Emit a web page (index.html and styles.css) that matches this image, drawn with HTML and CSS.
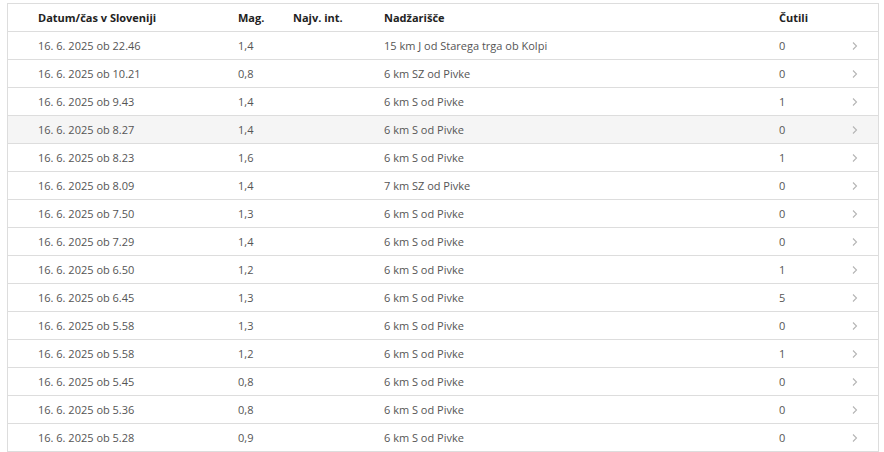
FILE: index.html
```html
<!DOCTYPE html>
<html lang="sl">
<head>
<meta charset="utf-8">
<link rel="stylesheet" href="styles.css">
</head>
<body>
<div class="wrap">
<table class="quakes">
<thead>
<tr>
<th class="c-date">Datum/čas v Sloveniji</th>
<th class="c-mag">Mag.</th>
<th class="c-int">Najv. int.</th>
<th class="c-loc">Nadžarišče</th>
<th class="c-felt">Čutili</th>
<th class="c-arr"></th>
</tr>
</thead>
<tbody>
<tr><td class="c-date">16. 6. 2025 ob 22.46</td><td>1,4</td><td></td><td>15 km J od Starega trga ob Kolpi</td><td>0</td><td class="c-arr"><svg class="chev" width="6" height="10" viewBox="0 0 6 10"><path d="M1 1.5 L4.5 5 L1 8.5"/></svg></td></tr>
<tr><td class="c-date">16. 6. 2025 ob 10.21</td><td>0,8</td><td></td><td>6 km SZ od Pivke</td><td>0</td><td class="c-arr"><svg class="chev" width="6" height="10" viewBox="0 0 6 10"><path d="M1 1.5 L4.5 5 L1 8.5"/></svg></td></tr>
<tr><td class="c-date">16. 6. 2025 ob 9.43</td><td>1,4</td><td></td><td>6 km S od Pivke</td><td>1</td><td class="c-arr"><svg class="chev" width="6" height="10" viewBox="0 0 6 10"><path d="M1 1.5 L4.5 5 L1 8.5"/></svg></td></tr>
<tr class="hover"><td class="c-date">16. 6. 2025 ob 8.27</td><td>1,4</td><td></td><td>6 km S od Pivke</td><td>0</td><td class="c-arr"><svg class="chev" width="6" height="10" viewBox="0 0 6 10"><path d="M1 1.5 L4.5 5 L1 8.5"/></svg></td></tr>
<tr><td class="c-date">16. 6. 2025 ob 8.23</td><td>1,6</td><td></td><td>6 km S od Pivke</td><td>1</td><td class="c-arr"><svg class="chev" width="6" height="10" viewBox="0 0 6 10"><path d="M1 1.5 L4.5 5 L1 8.5"/></svg></td></tr>
<tr><td class="c-date">16. 6. 2025 ob 8.09</td><td>1,4</td><td></td><td>7 km SZ od Pivke</td><td>0</td><td class="c-arr"><svg class="chev" width="6" height="10" viewBox="0 0 6 10"><path d="M1 1.5 L4.5 5 L1 8.5"/></svg></td></tr>
<tr><td class="c-date">16. 6. 2025 ob 7.50</td><td>1,3</td><td></td><td>6 km S od Pivke</td><td>0</td><td class="c-arr"><svg class="chev" width="6" height="10" viewBox="0 0 6 10"><path d="M1 1.5 L4.5 5 L1 8.5"/></svg></td></tr>
<tr><td class="c-date">16. 6. 2025 ob 7.29</td><td>1,4</td><td></td><td>6 km S od Pivke</td><td>0</td><td class="c-arr"><svg class="chev" width="6" height="10" viewBox="0 0 6 10"><path d="M1 1.5 L4.5 5 L1 8.5"/></svg></td></tr>
<tr><td class="c-date">16. 6. 2025 ob 6.50</td><td>1,2</td><td></td><td>6 km S od Pivke</td><td>1</td><td class="c-arr"><svg class="chev" width="6" height="10" viewBox="0 0 6 10"><path d="M1 1.5 L4.5 5 L1 8.5"/></svg></td></tr>
<tr><td class="c-date">16. 6. 2025 ob 6.45</td><td>1,3</td><td></td><td>6 km S od Pivke</td><td>5</td><td class="c-arr"><svg class="chev" width="6" height="10" viewBox="0 0 6 10"><path d="M1 1.5 L4.5 5 L1 8.5"/></svg></td></tr>
<tr><td class="c-date">16. 6. 2025 ob 5.58</td><td>1,3</td><td></td><td>6 km S od Pivke</td><td>0</td><td class="c-arr"><svg class="chev" width="6" height="10" viewBox="0 0 6 10"><path d="M1 1.5 L4.5 5 L1 8.5"/></svg></td></tr>
<tr><td class="c-date">16. 6. 2025 ob 5.58</td><td>1,2</td><td></td><td>6 km S od Pivke</td><td>1</td><td class="c-arr"><svg class="chev" width="6" height="10" viewBox="0 0 6 10"><path d="M1 1.5 L4.5 5 L1 8.5"/></svg></td></tr>
<tr><td class="c-date">16. 6. 2025 ob 5.45</td><td>0,8</td><td></td><td>6 km S od Pivke</td><td>0</td><td class="c-arr"><svg class="chev" width="6" height="10" viewBox="0 0 6 10"><path d="M1 1.5 L4.5 5 L1 8.5"/></svg></td></tr>
<tr><td class="c-date">16. 6. 2025 ob 5.36</td><td>0,8</td><td></td><td>6 km S od Pivke</td><td>0</td><td class="c-arr"><svg class="chev" width="6" height="10" viewBox="0 0 6 10"><path d="M1 1.5 L4.5 5 L1 8.5"/></svg></td></tr>
<tr><td class="c-date">16. 6. 2025 ob 5.28</td><td>0,9</td><td></td><td>6 km S od Pivke</td><td>0</td><td class="c-arr"><svg class="chev" width="6" height="10" viewBox="0 0 6 10"><path d="M1 1.5 L4.5 5 L1 8.5"/></svg></td></tr>
</tbody>
</table>
</div>
</body>
</html>
```

FILE: styles.css
```css
html, body {
  margin: 0;
  padding: 0;
  background: #fff;
}
body {
  font-family: "Open Sans", "Liberation Sans", sans-serif;
  font-size: 11px;
  color: #555;
}
.wrap {
  padding: 3px 0 0 7px;
}
.quakes {
  width: 872px;
  border-collapse: collapse;
  table-layout: fixed;
  border: 1px solid #ddd;
}
.quakes th,
.quakes td {
  height: 27px;
  padding: 0;
  text-align: left;
  vertical-align: middle;
  border-bottom: 1px solid #ddd;
  white-space: nowrap;
}
.quakes th {
  font-weight: 700;
  color: #222;
}
.quakes .c-date { width: 200px; padding-left: 30px; }
.quakes .c-mag { width: 55px; }
.quakes .c-int { width: 91px; }
.quakes .c-loc { width: 395px; }
.quakes .c-felt { width: 70px; }
.quakes .c-arr { width: auto; }
.hover td { background: #f5f5f5; }
.chev {
  display: block;
  margin-left: 3px;
  fill: none;
  stroke: #b5b5b5;
  stroke-width: 1.1;
}
```
